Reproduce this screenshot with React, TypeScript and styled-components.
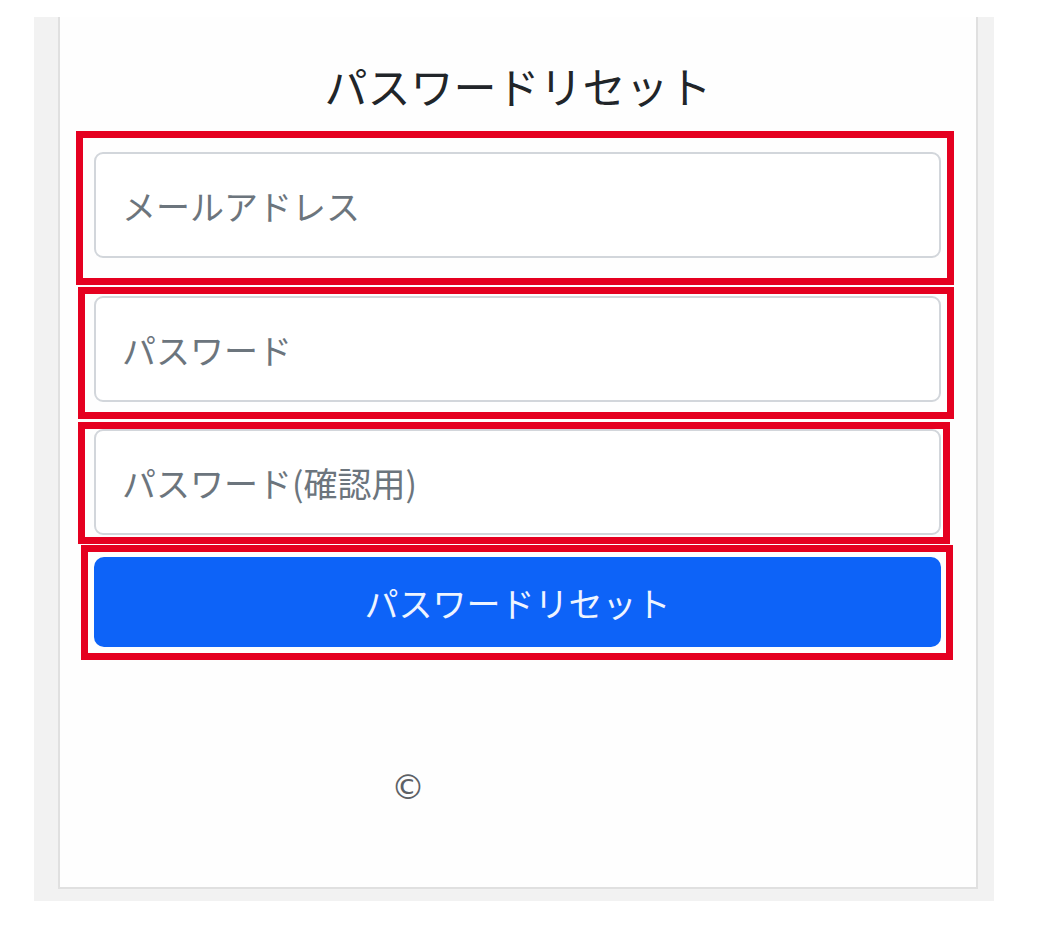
import styled, { createGlobalStyle } from "styled-components";

const GlobalStyle = createGlobalStyle`
  body {
    margin: 0;
    background: #ffffff;
    font-family: "Noto Sans CJK JP", "Noto Sans", sans-serif;
    color: #212529;
  }
`;

const Backdrop = styled.div`
  box-sizing: border-box;
  width: 960px;
  margin: 17px 0 0 34px;
  padding: 0 16px 12px 24px;
  background: #f2f2f2;
`;

const Card = styled.div`
  box-sizing: border-box;
  height: 872px;
  padding-top: 43px;
  background: #fefefe;
  border: 2px solid #e0e0e0;
  border-top: none;
  display: flex;
  flex-direction: column;
`;

const Title = styled.h1`
  margin: 0;
  font-size: 43px;
  line-height: 50px;
  font-weight: 400;
  text-align: center;
  color: #212529;
`;

const Form = styled.form`
  display: flex;
  flex-direction: column;
  margin-top: 21px;
`;

// 赤枠（注釈）
const Highlight = styled.div<{ $mt: number; $mx: string; $pad: string }>`
  margin-top: ${(p) => p.$mt}px;
  margin-left: ${(p) => p.$mx.split(" ")[0]};
  margin-right: ${(p) => p.$mx.split(" ")[1]};
  padding: ${(p) => p.$pad};
  border: 7px solid #e50020;
  display: flex;
  flex-direction: column;
`;

const Field = styled.input`
  box-sizing: border-box;
  height: 106px;
  width: 100%;
  padding: 0 26px;
  border: 2px solid #d2d6db;
  border-radius: 9px;
  background: #ffffff;
  font-family: "Noto Sans CJK JP", "Noto Sans", sans-serif;
  font-size: 34px;
  color: #212529;
  outline: none;

  &::placeholder {
    color: #6c757d;
  }
`;

const SubmitButton = styled.button`
  height: 90px;
  width: 100%;
  border: none;
  border-radius: 10px;
  background: #0d63f8;
  color: #eef4ff;
  font-family: "Noto Sans CJK JP", "Noto Sans", sans-serif;
  font-size: 34px;
  cursor: pointer;
`;

const Footer = styled.footer`
  margin-top: 107px;
  padding-left: 331px;
  font-family: "DejaVu Sans", sans-serif;
  font-size: 34px;
  line-height: 40px;
  color: #5d6166;
`;

const fields = [
  { placeholder: "メールアドレス", type: "email", mt: 0, mx: "16px 22px", pad: "14px 6px 20px 11px" },
  { placeholder: "パスワード", type: "password", mt: 2, mx: "18px 22px", pad: "2px 6px 10px 9px" },
  { placeholder: "パスワード(確認用)", type: "password", mt: 3, mx: "18px 26px", pad: "0 2px 2px 9px" },
];

export default function App() {
  return (
    <>
      <GlobalStyle />
      <Backdrop>
        <Card>
          <Title>パスワードリセット</Title>
          <Form onSubmit={(e) => e.preventDefault()}>
            {fields.map((f) => (
              <Highlight key={f.placeholder} $mt={f.mt} $mx={f.mx} $pad={f.pad}>
                <Field type={f.type} placeholder={f.placeholder} />
              </Highlight>
            ))}
            <Highlight $mt={1} $mx="21px 23px" $pad="5px 5px 6px 6px">
              <SubmitButton type="submit">パスワードリセット</SubmitButton>
            </Highlight>
          </Form>
          <Footer>©</Footer>
        </Card>
      </Backdrop>
    </>
  );
}
